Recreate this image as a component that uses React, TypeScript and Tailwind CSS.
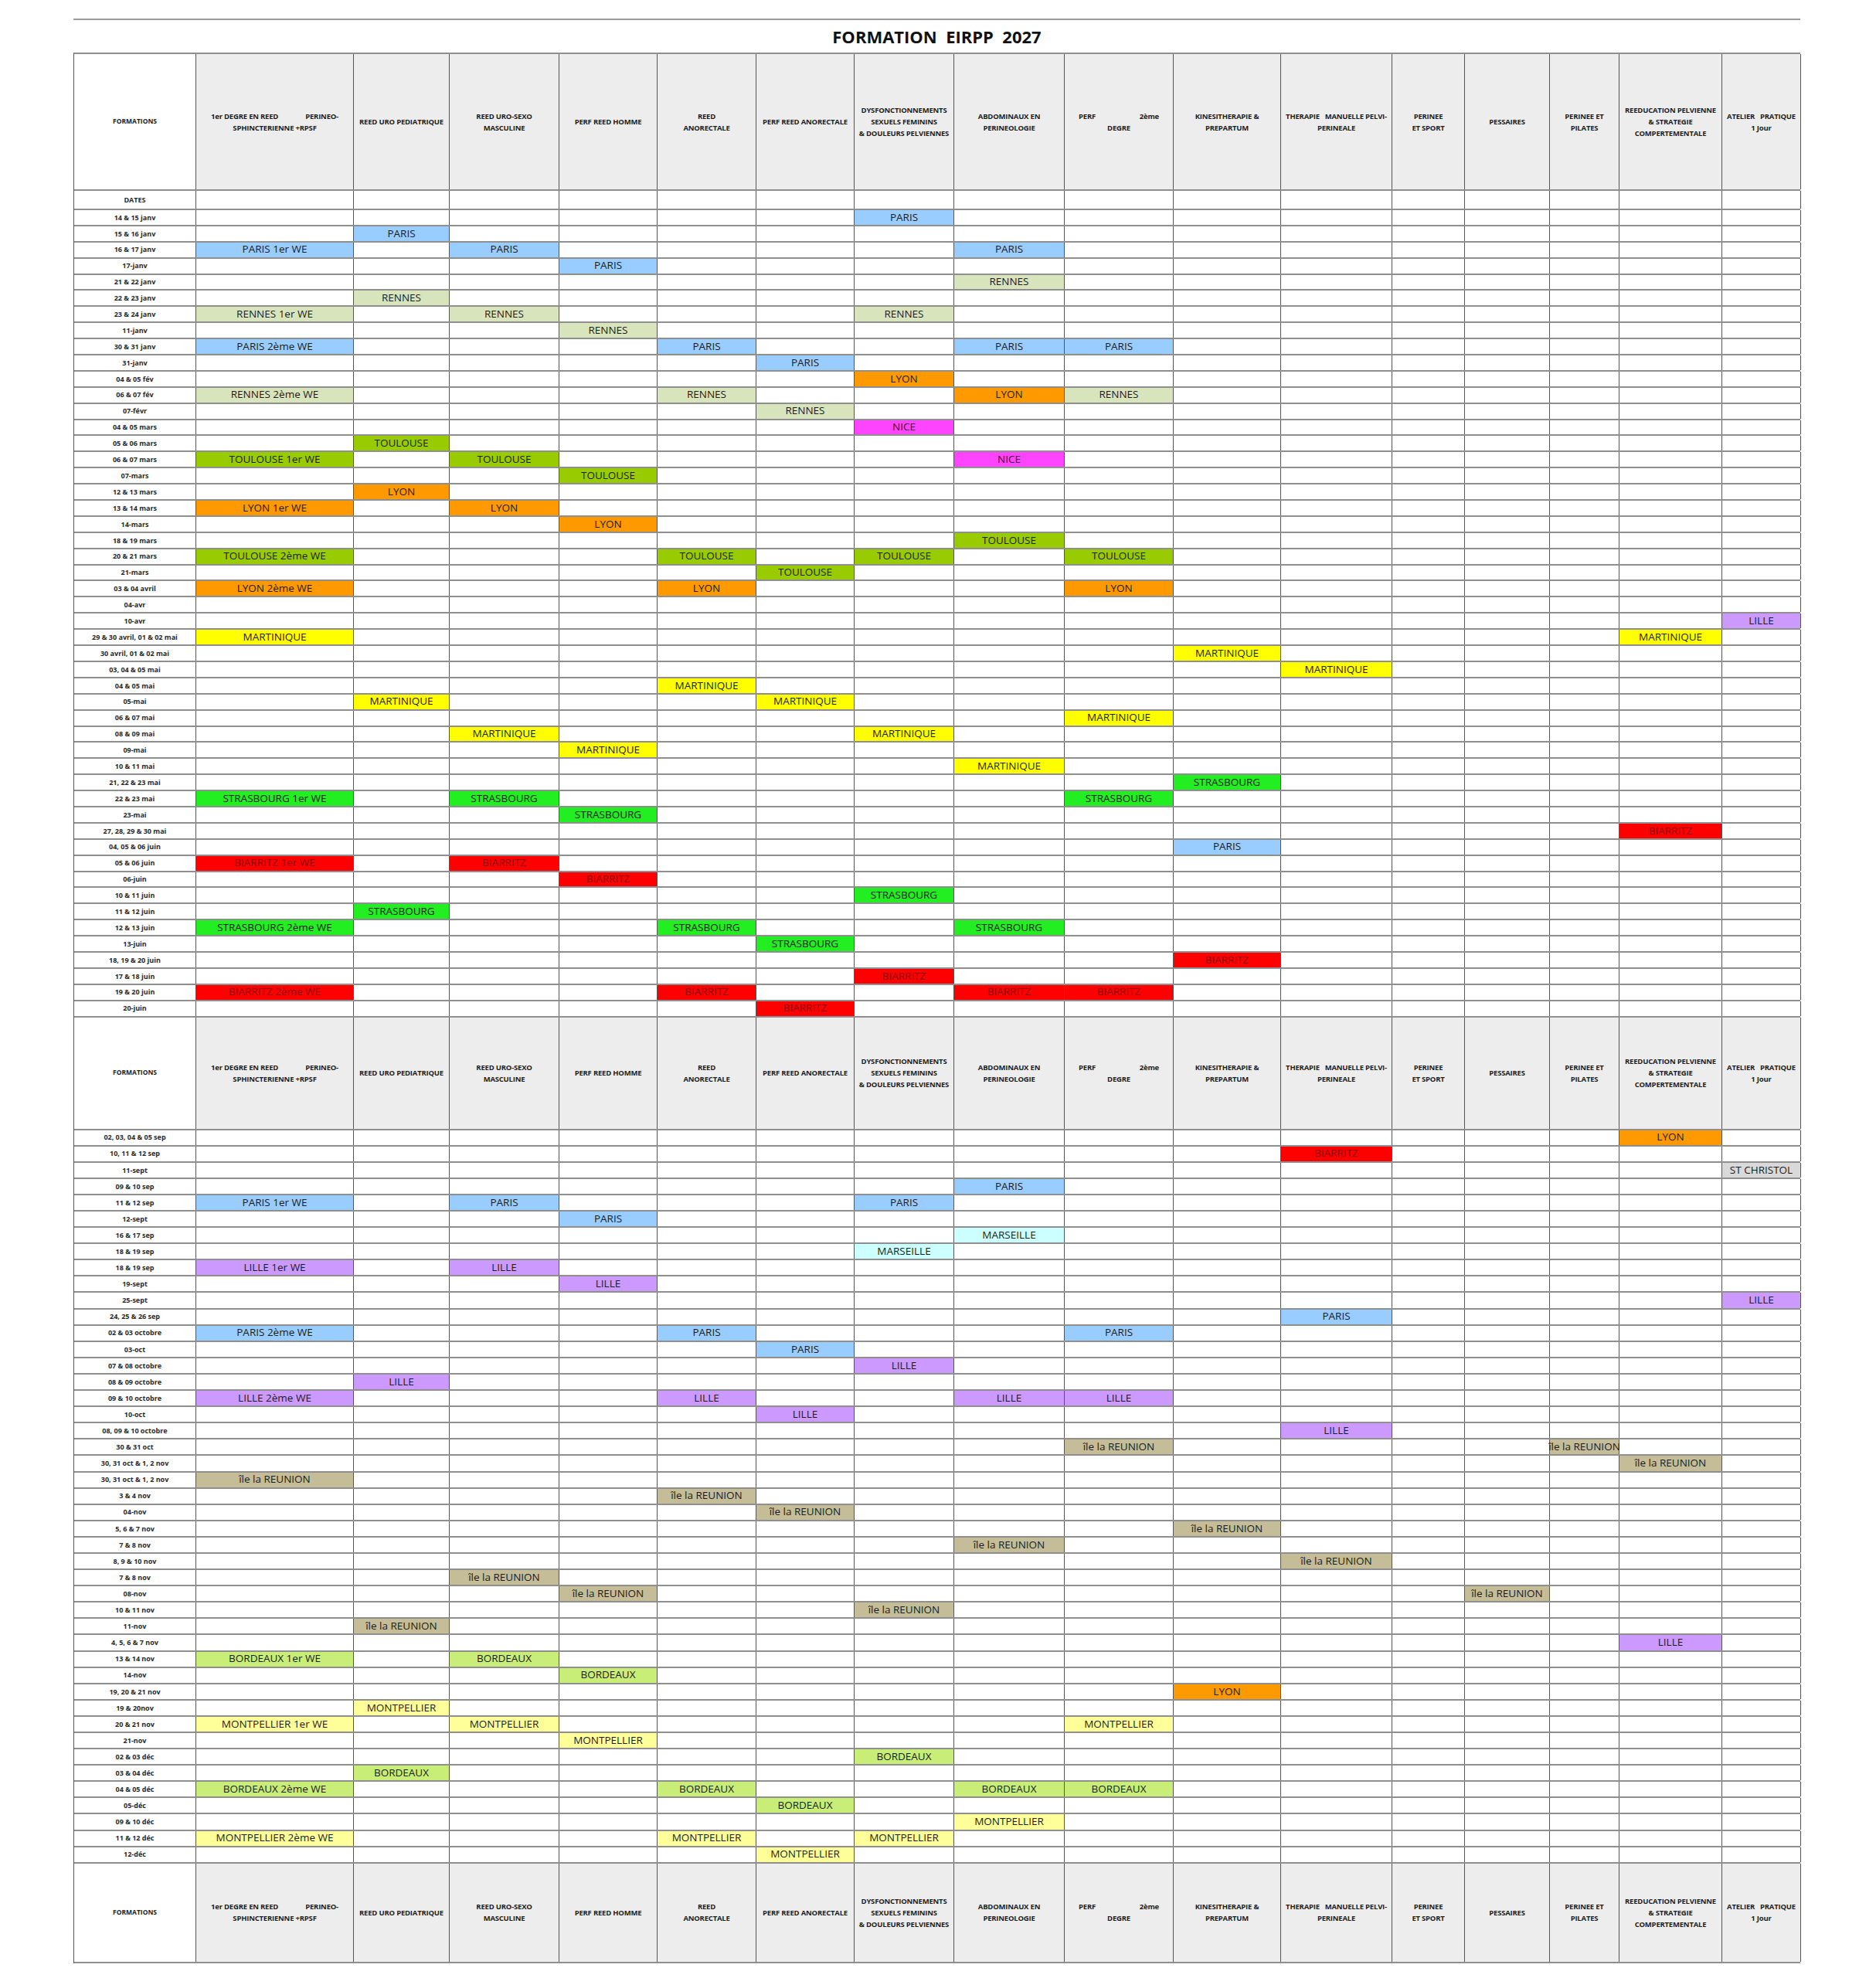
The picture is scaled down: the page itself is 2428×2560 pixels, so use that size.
import React from 'react'

// Planning EIRPP 2027 – reproduction of the Excel calendar sheet.
const GRID =
  'grid grid-cols-[158px_204px_124px_142px_127px_128px_127px_129px_143px_141px_139px_144px_94px_110px_90px_133px_102px]'

const COLORS: Record<string, string> = {
  PARIS: 'bg-[#99ccff]',
  RENNES: 'bg-[#d8e4bc]',
  LYON: 'bg-[#ff9900]',
  NICE: 'bg-[#ff44ff] text-[#3a1048]',
  TOULOUSE: 'bg-[#99cc00]',
  MARTINIQUE: 'bg-[#ffff00]',
  STRASBOURG: 'bg-[#22ee22]',
  BIARRITZ: 'bg-[#ff0000] text-[#8a0000]',
  LILLE: 'bg-[#cc99ff]',
  ST: 'bg-[#d9d9d9]',
  MARSEILLE: 'bg-[#ccffff]',
  'île': 'bg-[#c4bd97]',
  BORDEAUX: 'bg-[#c8ee78]',
  MONTPELLIER: 'bg-[#ffff99]',
}

type Line = [number, string][]
type RowData = [string, Line]

const FIRST: RowData[] = [
  ['14 & 15 janv', [[7, 'PARIS']]],
  ['15 & 16 janv', [[2, 'PARIS']]],
  ['16 & 17 janv', [[1, 'PARIS 1er WE'], [3, 'PARIS'], [8, 'PARIS']]],
  ['17-janv', [[4, 'PARIS']]],
  ['21 & 22 janv', [[8, 'RENNES']]],
  ['22 & 23 janv', [[2, 'RENNES']]],
  ['23 & 24 janv', [[1, 'RENNES 1er WE'], [3, 'RENNES'], [7, 'RENNES']]],
  ['11-janv', [[4, 'RENNES']]],
  ['30 & 31 janv', [[1, 'PARIS 2ème WE'], [5, 'PARIS'], [8, 'PARIS'], [9, 'PARIS']]],
  ['31-janv', [[6, 'PARIS']]],
  ['04 & 05 fév', [[7, 'LYON']]],
  ['06 & 07 fév', [[1, 'RENNES 2ème WE'], [5, 'RENNES'], [8, 'LYON'], [9, 'RENNES']]],
  ['07-févr', [[6, 'RENNES']]],
  ['04 & 05 mars', [[7, 'NICE']]],
  ['05 & 06 mars', [[2, 'TOULOUSE']]],
  ['06 & 07 mars', [[1, 'TOULOUSE 1er WE'], [3, 'TOULOUSE'], [8, 'NICE']]],
  ['07-mars', [[4, 'TOULOUSE']]],
  ['12 & 13 mars', [[2, 'LYON']]],
  ['13 & 14 mars', [[1, 'LYON 1er WE'], [3, 'LYON']]],
  ['14-mars', [[4, 'LYON']]],
  ['18 & 19 mars', [[8, 'TOULOUSE']]],
  ['20 & 21 mars', [[1, 'TOULOUSE 2ème WE'], [5, 'TOULOUSE'], [7, 'TOULOUSE'], [9, 'TOULOUSE']]],
  ['21-mars', [[6, 'TOULOUSE']]],
  ['03 & 04 avril', [[1, 'LYON 2ème WE'], [5, 'LYON'], [9, 'LYON']]],
  ['04-avr', []],
  ['10-avr', [[16, 'LILLE']]],
  ['29 & 30 avril, 01 & 02 mai', [[1, 'MARTINIQUE'], [15, 'MARTINIQUE']]],
  ['30 avril, 01 & 02 mai', [[10, 'MARTINIQUE']]],
  ['03, 04 & 05 mai', [[11, 'MARTINIQUE']]],
  ['04 & 05 mai', [[5, 'MARTINIQUE']]],
  ['05-mai', [[2, 'MARTINIQUE'], [6, 'MARTINIQUE']]],
  ['06 & 07 mai', [[9, 'MARTINIQUE']]],
  ['08 & 09 mai', [[3, 'MARTINIQUE'], [7, 'MARTINIQUE']]],
  ['09-mai', [[4, 'MARTINIQUE']]],
  ['10 & 11 mai', [[8, 'MARTINIQUE']]],
  ['21, 22 & 23 mai', [[10, 'STRASBOURG']]],
  ['22 & 23 mai', [[1, 'STRASBOURG 1er WE'], [3, 'STRASBOURG'], [9, 'STRASBOURG']]],
  ['23-mai', [[4, 'STRASBOURG']]],
  ['27, 28, 29 & 30 mai', [[15, 'BIARRITZ']]],
  ['04, 05 & 06 juin', [[10, 'PARIS']]],
  ['05 & 06 juin', [[1, 'BIARRITZ 1er WE'], [3, 'BIARRITZ']]],
  ['06-juin', [[4, 'BIARRITZ']]],
  ['10 & 11 juin', [[7, 'STRASBOURG']]],
  ['11 & 12 juin', [[2, 'STRASBOURG']]],
  ['12 & 13 juin', [[1, 'STRASBOURG 2ème WE'], [5, 'STRASBOURG'], [8, 'STRASBOURG']]],
  ['13-juin', [[6, 'STRASBOURG']]],
  ['18, 19 & 20 juin', [[10, 'BIARRITZ']]],
  ['17 & 18 juin', [[7, 'BIARRITZ']]],
  ['19 & 20 juin', [[1, 'BIARRITZ 2ème WE'], [5, 'BIARRITZ'], [8, 'BIARRITZ'], [9, 'BIARRITZ']]],
  ['20-juin', [[6, 'BIARRITZ']]],
]

const REU = 'île la REUNION'

const SECOND: RowData[] = [
  ['02, 03, 04 & 05 sep', [[15, 'LYON']]],
  ['10, 11 & 12 sep', [[11, 'BIARRITZ']]],
  ['11-sept', [[16, 'ST CHRISTOL']]],
  ['09 & 10 sep', [[8, 'PARIS']]],
  ['11 & 12 sep', [[1, 'PARIS 1er WE'], [3, 'PARIS'], [7, 'PARIS']]],
  ['12-sept', [[4, 'PARIS']]],
  ['16 & 17 sep', [[8, 'MARSEILLE']]],
  ['18 & 19 sep', [[7, 'MARSEILLE']]],
  ['18 & 19 sep', [[1, 'LILLE 1er WE'], [3, 'LILLE']]],
  ['19-sept', [[4, 'LILLE']]],
  ['25-sept', [[16, 'LILLE']]],
  ['24, 25 & 26 sep', [[11, 'PARIS']]],
  ['02 & 03 octobre', [[1, 'PARIS 2ème WE'], [5, 'PARIS'], [9, 'PARIS']]],
  ['03-oct', [[6, 'PARIS']]],
  ['07 & 08 octobre', [[7, 'LILLE']]],
  ['08 & 09 octobre', [[2, 'LILLE']]],
  ['09 & 10 octobre', [[1, 'LILLE 2ème WE'], [5, 'LILLE'], [8, 'LILLE'], [9, 'LILLE']]],
  ['10-oct', [[6, 'LILLE']]],
  ['08, 09 & 10 octobre', [[11, 'LILLE']]],
  ['30 & 31 oct', [[9, REU], [14, REU]]],
  ['30, 31 oct & 1, 2 nov', [[15, REU]]],
  ['30, 31 oct & 1, 2 nov', [[1, REU]]],
  ['3 & 4 nov', [[5, REU]]],
  ['04-nov', [[6, REU]]],
  ['5, 6 & 7 nov', [[10, REU]]],
  ['7 & 8 nov', [[8, REU]]],
  ['8, 9 & 10 nov', [[11, REU]]],
  ['7 & 8 nov', [[3, REU]]],
  ['08-nov', [[4, REU], [13, REU]]],
  ['10 & 11 nov', [[7, REU]]],
  ['11-nov', [[2, REU]]],
  ['4, 5, 6 & 7 nov', [[15, 'LILLE']]],
  ['13 & 14 nov', [[1, 'BORDEAUX 1er WE'], [3, 'BORDEAUX']]],
  ['14-nov', [[4, 'BORDEAUX']]],
  ['19, 20 & 21 nov', [[10, 'LYON']]],
  ['19 & 20nov', [[2, 'MONTPELLIER']]],
  ['20 & 21 nov', [[1, 'MONTPELLIER 1er WE'], [3, 'MONTPELLIER'], [9, 'MONTPELLIER']]],
  ['21-nov', [[4, 'MONTPELLIER']]],
  ['02 & 03 déc', [[7, 'BORDEAUX']]],
  ['03 & 04 déc', [[2, 'BORDEAUX']]],
  ['04 & 05 déc', [[1, 'BORDEAUX 2ème WE'], [5, 'BORDEAUX'], [8, 'BORDEAUX'], [9, 'BORDEAUX']]],
  ['05-déc', [[6, 'BORDEAUX']]],
  ['09 & 10 déc', [[8, 'MONTPELLIER']]],
  ['11 & 12 déc', [[1, 'MONTPELLIER 2ème WE'], [5, 'MONTPELLIER'], [7, 'MONTPELLIER']]],
  ['12-déc', [[6, 'MONTPELLIER']]],
]

const HEADS: React.ReactNode[][] = [
  [],
  [
    <span key="a" className="flex gap-[35px]">
      <span>1er DEGRE EN REED</span>
      <span>PERINEO-</span>
    </span>,
    'SPHINCTERIENNE +RPSF',
  ],
  ['REED URO PEDIATRIQUE'],
  ['REED URO-SEXO', 'MASCULINE'],
  ['PERF REED HOMME'],
  ['REED', 'ANORECTALE'],
  ['PERF REED ANORECTALE'],
  ['DYSFONCTIONNEMENTS', 'SEXUELS FEMININS', '& DOULEURS PELVIENNES'],
  ['ABDOMINAUX EN', 'PERINEOLOGIE'],
  [
    <span key="a" className="flex w-[104px] justify-between">
      <span>PERF</span>
      <span>2ème</span>
    </span>,
    'DEGRE',
  ],
  ['KINESITHERAPIE &', 'PREPARTUM'],
  ['THERAPIE   MANUELLE PELVI-', 'PERINEALE'],
  ['PERINEE', 'ET SPORT'],
  ['PESSAIRES'],
  ['PERINEE ET', 'PILATES'],
  ['REEDUCATION PELVIENNE', '& STRATEGIE', 'COMPERTEMENTALE'],
  ['ATELIER   PRATIQUE', '1 Jour'],
]

function HeaderRow({ h }: { h: string }) {
  return (
    <div className={`${GRID} ${h} border-b-2 border-[#8f8f8f]`}>
      <div className="flex items-center justify-center border-r border-[#555] bg-white text-[8.5px] font-bold text-[#222]">
        FORMATIONS
      </div>
      {HEADS.slice(1).map((lines, i) => (
        <div
          key={i}
          className="flex flex-col items-center justify-center overflow-visible border-r border-[#555] bg-[#ededed] text-center text-[9.5px] font-bold leading-[15px] tracking-[-0.2px] text-[#1e1e1e]"
        >
          {lines.map((l, j) => (
            <div key={j} className="whitespace-pre">
              {l}
            </div>
          ))}
        </div>
      ))}
    </div>
  )
}

function Row({ date, cells, h }: { date: string; cells: Line; h: string }) {
  const byCol = new Map(cells)
  return (
    <div className={`${GRID} ${h} border-b-2 border-[#8f8f8f]`}>
      <div className="flex items-center justify-center whitespace-nowrap border-r border-[#555] text-[9px] font-bold text-[#2a2a2a]">
        {date}
      </div>
      {Array.from({ length: 16 }, (_, i) => {
        const txt = byCol.get(i + 1)
        const color = txt ? COLORS[txt.split(' ')[0]] : ''
        return (
          <div
            key={i}
            className={`flex items-center justify-center whitespace-nowrap border-r border-[#555] text-[13.5px] leading-none text-[#1c1c1c] ${color}`}
          >
            {txt}
          </div>
        )
      })}
    </div>
  )
}

export default function App() {
  return (
    <div className="h-[2560px] w-[2428px] bg-white font-['Open_Sans','Noto_Sans',sans-serif]">
      <div className="ml-[95px] w-[2235px] pt-[24px]">
        <div className="h-[2px] bg-[#9a9a9a]" />
        <div className="flex h-[42px] items-center justify-center whitespace-pre text-[22px] font-bold text-[#111]">
          FORMATION  EIRPP  2027
        </div>
        <div className="border-l border-t-2 border-l-[#555] border-t-[#8f8f8f]">
          <HeaderRow h="h-[177px]" />
          <Row date="DATES" cells={[]} h="h-[25px]" />
          {FIRST.map(([d, c], i) => (
            <Row key={i} date={d} cells={c} h="h-[20.9px]" />
          ))}
          <HeaderRow h="h-[146px]" />
          {SECOND.map(([d, c], i) => (
            <Row key={i} date={d} cells={c} h="h-[21.1px]" />
          ))}
          <HeaderRow h="h-[129px]" />
        </div>
      </div>
    </div>
  )
}
